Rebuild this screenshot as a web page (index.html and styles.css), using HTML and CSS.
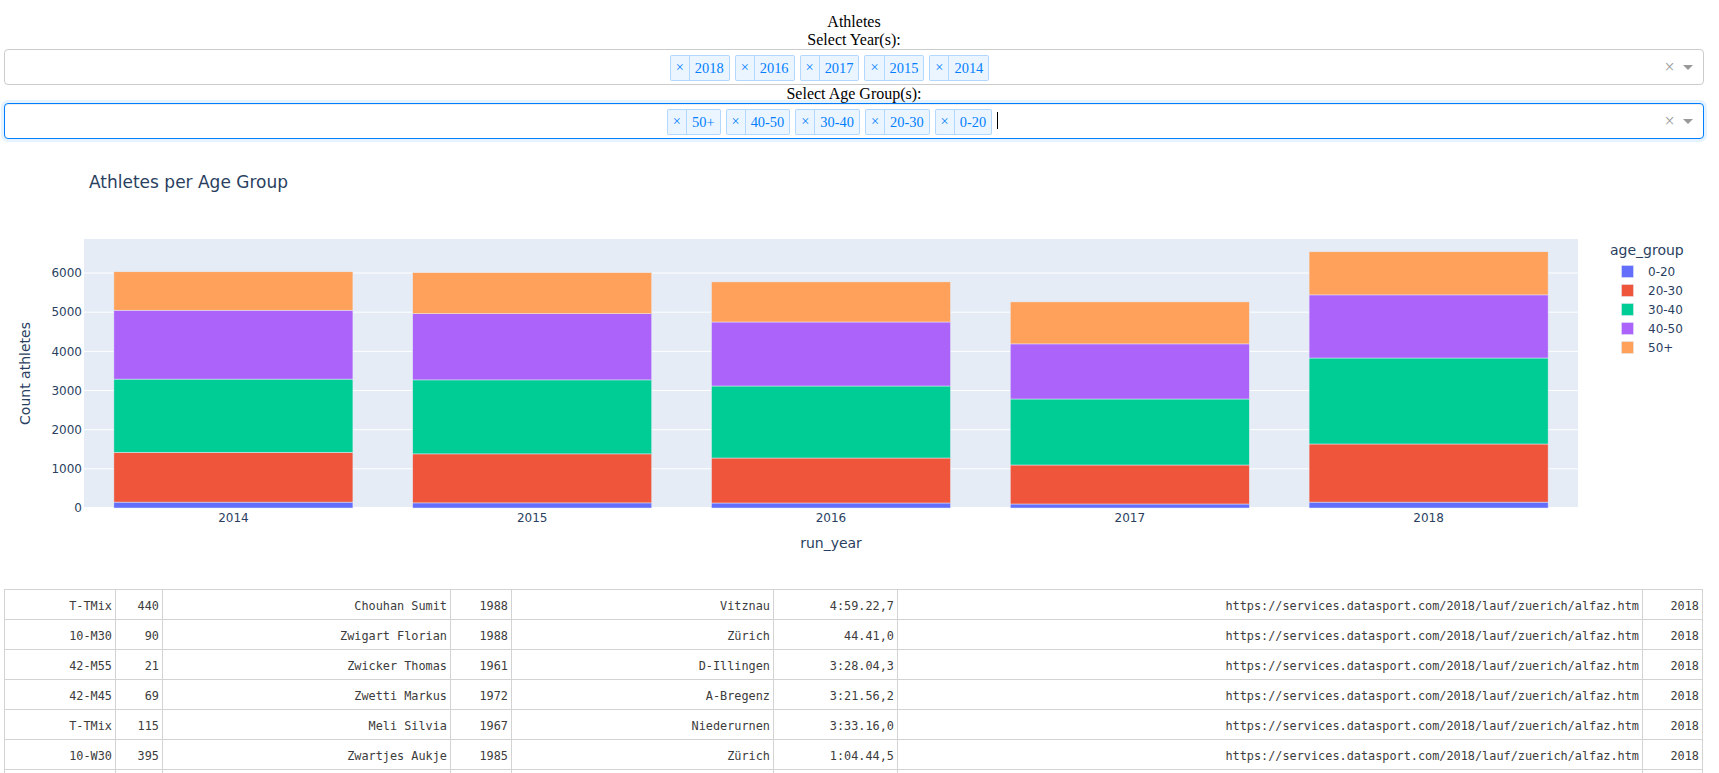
FILE: index.html
```html
<!DOCTYPE html>
<html lang="en">
<head>
<meta charset="utf-8">
<title>Athletes</title>
<link rel="stylesheet" href="styles.css">
</head>
<body>
<div class="app">
  <div class="line">Athletes</div>
  <div class="line">Select Year(s):</div>
  <div class="select">
    <div class="values">
      <div class="tag"><span class="tag-x">×</span><span class="tag-label">2018</span></div>
      <div class="tag"><span class="tag-x">×</span><span class="tag-label">2016</span></div>
      <div class="tag"><span class="tag-x">×</span><span class="tag-label">2017</span></div>
      <div class="tag"><span class="tag-x">×</span><span class="tag-label">2015</span></div>
      <div class="tag"><span class="tag-x">×</span><span class="tag-label">2014</span></div>
      <span class="sel-input"></span>
    </div>
    <span class="clear-zone">×</span>
    <span class="arrow-zone"><span class="arrow"></span></span>
  </div>
  <div class="line">Select Age Group(s):</div>
  <div class="select focused">
    <div class="values">
      <div class="tag"><span class="tag-x">×</span><span class="tag-label">50+</span></div>
      <div class="tag"><span class="tag-x">×</span><span class="tag-label">40-50</span></div>
      <div class="tag"><span class="tag-x">×</span><span class="tag-label">30-40</span></div>
      <div class="tag"><span class="tag-x">×</span><span class="tag-label">20-30</span></div>
      <div class="tag"><span class="tag-x">×</span><span class="tag-label">0-20</span></div>
      <span class="sel-input"><span class="caret"></span></span>
    </div>
    <span class="clear-zone">×</span>
    <span class="arrow-zone"><span class="arrow"></span></span>
  </div>

  <div class="graph">
    <svg class="chart" width="1700" height="450" viewBox="0 0 1700 450">
      <rect class="plotbg" x="80" y="100" width="1494" height="269"/>
      <g class="grid">
        <line x1="80" x2="1574" y1="329.83" y2="329.83"/>
        <line x1="80" x2="1574" y1="290.67" y2="290.67"/>
        <line x1="80" x2="1574" y1="251.5" y2="251.5"/>
        <line x1="80" x2="1574" y1="212.33" y2="212.33"/>
        <line x1="80" x2="1574" y1="173.17" y2="173.17"/>
        <line x1="80" x2="1574" y1="134" y2="134"/>
      </g>
      <line class="zero" x1="80" x2="1574" y1="369" y2="369"/>
      <g class="bars">
        <rect class="s0" x="109.88" y="363.1" width="239.04" height="5.9"/>
        <rect class="s1" x="109.88" y="313.4" width="239.04" height="49.7"/>
        <rect class="s2" x="109.88" y="240.1" width="239.04" height="73.3"/>
        <rect class="s3" x="109.88" y="171.2" width="239.04" height="68.9"/>
        <rect class="s4" x="109.88" y="132.8" width="239.04" height="38.4"/>

        <rect class="s0" x="408.68" y="363.9" width="239.04" height="5.1"/>
        <rect class="s1" x="408.68" y="314.9" width="239.04" height="49.0"/>
        <rect class="s2" x="408.68" y="240.9" width="239.04" height="74.0"/>
        <rect class="s3" x="408.68" y="174.7" width="239.04" height="66.2"/>
        <rect class="s4" x="408.68" y="133.6" width="239.04" height="41.1"/>

        <rect class="s0" x="707.48" y="364.0" width="239.04" height="5.0"/>
        <rect class="s1" x="707.48" y="319.0" width="239.04" height="45.0"/>
        <rect class="s2" x="707.48" y="247.0" width="239.04" height="72.0"/>
        <rect class="s3" x="707.48" y="183.0" width="239.04" height="64.0"/>
        <rect class="s4" x="707.48" y="142.9" width="239.04" height="40.1"/>

        <rect class="s0" x="1006.28" y="365.0" width="239.04" height="4.0"/>
        <rect class="s1" x="1006.28" y="326.0" width="239.04" height="39.0"/>
        <rect class="s2" x="1006.28" y="260.0" width="239.04" height="66.0"/>
        <rect class="s3" x="1006.28" y="204.9" width="239.04" height="55.1"/>
        <rect class="s4" x="1006.28" y="162.9" width="239.04" height="42.0"/>

        <rect class="s0" x="1305.08" y="363.1" width="239.04" height="5.9"/>
        <rect class="s1" x="1305.08" y="305.0" width="239.04" height="58.1"/>
        <rect class="s2" x="1305.08" y="219.0" width="239.04" height="86.0"/>
        <rect class="s3" x="1305.08" y="155.9" width="239.04" height="63.1"/>
        <rect class="s4" x="1305.08" y="112.8" width="239.04" height="43.1"/>
      </g>
      <g class="ytick">
        <text x="78" y="373.2">0</text>
        <text x="78" y="334.0">1000</text>
        <text x="78" y="294.9">2000</text>
        <text x="78" y="255.7">3000</text>
        <text x="78" y="216.5">4000</text>
        <text x="78" y="177.4">5000</text>
        <text x="78" y="138.2">6000</text>
      </g>
      <g class="xtick">
        <text x="229.4" y="382.5">2014</text>
        <text x="528.2" y="382.5">2015</text>
        <text x="827" y="382.5">2016</text>
        <text x="1125.8" y="382.5">2017</text>
        <text x="1424.6" y="382.5">2018</text>
      </g>
      <text class="title" x="85" y="48.5">Athletes per Age Group</text>
      <text class="axis-title mid" x="827" y="409">run_year</text>
      <text class="axis-title mid" x="26" y="234.5" transform="rotate(-90 26 234.5)">Count athletes</text>
      <g class="legend">
        <text class="legend-title" x="1606" y="116">age_group</text>
        <rect class="s0" x="1617.5" y="126.5" width="12" height="12"/>
        <rect class="s1" x="1617.5" y="145.5" width="12" height="12"/>
        <rect class="s2" x="1617.5" y="164.5" width="12" height="12"/>
        <rect class="s3" x="1617.5" y="183.5" width="12" height="12"/>
        <rect class="s4" x="1617.5" y="202.5" width="12" height="12"/>
        <text x="1644" y="137">0-20</text>
        <text x="1644" y="156">20-30</text>
        <text x="1644" y="175">30-40</text>
        <text x="1644" y="194">40-50</text>
        <text x="1644" y="213">50+</text>
      </g>
    </svg>
  </div>

  <div class="table-wrap">
    <table class="data">
      <colgroup>
        <col class="c1"><col class="c2"><col class="c3"><col class="c4">
        <col class="c5"><col class="c6"><col class="c7"><col class="c8">
      </colgroup>
      <tbody>
        <tr><td>T-TMix</td><td>440</td><td>Chouhan Sumit</td><td>1988</td><td>Vitznau</td><td>4:59.22,7</td><td>https://services.datasport.com/2018/lauf/zuerich/alfaz.htm</td><td>2018</td></tr>
        <tr><td>10-M30</td><td>90</td><td>Zwigart Florian</td><td>1988</td><td>Zürich</td><td>44.41,0</td><td>https://services.datasport.com/2018/lauf/zuerich/alfaz.htm</td><td>2018</td></tr>
        <tr><td>42-M55</td><td>21</td><td>Zwicker Thomas</td><td>1961</td><td>D-Illingen</td><td>3:28.04,3</td><td>https://services.datasport.com/2018/lauf/zuerich/alfaz.htm</td><td>2018</td></tr>
        <tr><td>42-M45</td><td>69</td><td>Zwetti Markus</td><td>1972</td><td>A-Bregenz</td><td>3:21.56,2</td><td>https://services.datasport.com/2018/lauf/zuerich/alfaz.htm</td><td>2018</td></tr>
        <tr><td>T-TMix</td><td>115</td><td>Meli Silvia</td><td>1967</td><td>Niederurnen</td><td>3:33.16,0</td><td>https://services.datasport.com/2018/lauf/zuerich/alfaz.htm</td><td>2018</td></tr>
        <tr><td>10-W30</td><td>395</td><td>Zwartjes Aukje</td><td>1985</td><td>Zürich</td><td>1:04.44,5</td><td>https://services.datasport.com/2018/lauf/zuerich/alfaz.htm</td><td>2018</td></tr>
        <tr><td></td><td></td><td></td><td></td><td></td><td></td><td></td><td></td></tr>
      </tbody>
    </table>
  </div>
</div>
</body>
</html>
```

FILE: styles.css
```css
html, body {
  margin: 0;
  padding: 0;
  background: #fff;
}

.app {
  width: 1700px;
  margin-left: 4px;
  padding-top: 13px;
  font-family: "Liberation Serif", "Times New Roman", serif;
  font-size: 16px;
  color: #000;
  text-align: center;
}

.line {
  height: 18px;
  line-height: 18px;
}

/* dropdown (react-select v1 look) */
.select {
  box-sizing: border-box;
  height: 36px;
  border: 1px solid #ccc;
  border-radius: 4px;
  background: #fff;
  display: flex;
  align-items: stretch;
}

.select.focused {
  border-color: #007eff;
  box-shadow: inset 0 1px 1px rgba(0, 0, 0, 0.075), 0 0 0 3px rgba(0, 126, 255, 0.1);
}

.values {
  flex: 1;
  display: flex;
  justify-content: center;
  align-items: flex-start;
}

.tag {
  display: flex;
  margin-left: 5px;
  margin-top: 5px;
  border: 1px solid rgba(0, 126, 255, 0.24);
  border-radius: 2px;
  background: rgba(0, 126, 255, 0.08);
  color: #007eff;
  font-size: 14.4px;
  line-height: 1.4;
}

.tag-x {
  padding: 1px 5px 3px;
  border-right: 1px solid rgba(0, 126, 255, 0.24);
}

.tag-label {
  padding: 2px 5px;
}

.sel-input {
  margin-left: 5px;
  width: 7px;
  height: 26px;
  margin-top: 5px;
  display: flex;
  align-items: flex-start;
}

.caret {
  margin-top: 3px;
  width: 0;
  height: 17px;
  border-left: 1px solid #000;
}

.clear-zone {
  width: 17px;
  color: #999;
  font-size: 18px;
  line-height: 34px;
  text-align: center;
}

.arrow-zone {
  width: 25px;
  padding-right: 5px;
  box-sizing: border-box;
  display: flex;
  align-items: center;
  justify-content: center;
}

.arrow {
  width: 0;
  height: 0;
  border-style: solid;
  border-width: 5px 5px 2.5px;
  border-color: #999 transparent transparent;
  margin-top: 2px;
}

/* chart */
.graph {
  height: 450px;
  text-align: left;
}

.chart {
  display: block;
  font-family: "DejaVu Sans", Verdana, sans-serif;
}

.plotbg { fill: #e5ecf6; }
.grid line { stroke: #fff; stroke-width: 1; }
.zero { stroke: #fff; stroke-width: 2; }

.bars rect, .legend rect {
  stroke: #e5ecf6;
  stroke-width: 0.5;
}

.s0 { fill: #636efa; }
.s1 { fill: #ef553b; }
.s2 { fill: #00cc96; }
.s3 { fill: #ab63fa; }
.s4 { fill: #ffa15a; }

.ytick text {
  font-size: 12px;
  fill: #2a3f5f;
  text-anchor: end;
}

.xtick text {
  font-size: 12px;
  fill: #2a3f5f;
  text-anchor: middle;
}

.title {
  font-size: 17px;
  fill: #2a3f5f;
}

.axis-title {
  font-size: 14px;
  fill: #2a3f5f;
}

.mid { text-anchor: middle; }

.legend text {
  font-size: 12px;
  fill: #2a3f5f;
}

.legend .legend-title {
  font-size: 14px;
}

/* table */
.table-wrap {
  height: 184px;
  overflow: hidden;
  text-align: left;
}

.data {
  width: 1698px;
  table-layout: fixed;
  border-collapse: collapse;
  font-family: "DejaVu Sans Mono", "Liberation Mono", monospace;
  font-size: 11.85px;
  color: rgb(60, 60, 60);
}

.data td {
  height: 30px;
  padding: 2px 3px 0;
  border: 1px solid #d3d3d3;
  text-align: right;
  white-space: nowrap;
  overflow: hidden;
  box-sizing: border-box;
}

.c1 { width: 111px; }
.c2 { width: 47px; }
.c3 { width: 288px; }
.c4 { width: 61px; }
.c5 { width: 262px; }
.c6 { width: 124px; }
.c7 { width: 745px; }
.c8 { width: 60px; }
```
